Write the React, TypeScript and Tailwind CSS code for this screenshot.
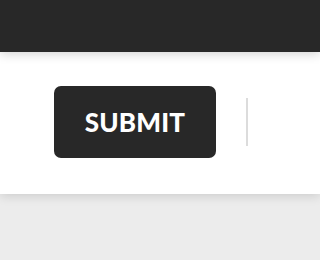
import React from 'react';

export default function App() {
  return (
    <div className="w-full h-[260px] bg-[#ececec] overflow-hidden font-['Lato',sans-serif]">
      {/* Top bar */}
      <div className="relative z-10 h-[52px] bg-[#282828] shadow-[0_2px_10px_rgba(0,0,0,0.18)]" />

      {/* Action strip */}
      <div className="relative h-[142px] bg-white shadow-[0_2px_10px_rgba(0,0,0,0.14)] flex items-center pl-[54px] pb-[2px]">
        <button className="w-[162px] h-[72px] shrink-0 rounded-[7px] bg-[#282828] text-white text-[26px] font-black tracking-[0.2px] flex items-center justify-center">
          SUBMIT
        </button>
        <div className="ml-[30px] w-[2px] h-[48px] shrink-0 bg-[#dcdcdc]" />
      </div>
    </div>
  );
}
